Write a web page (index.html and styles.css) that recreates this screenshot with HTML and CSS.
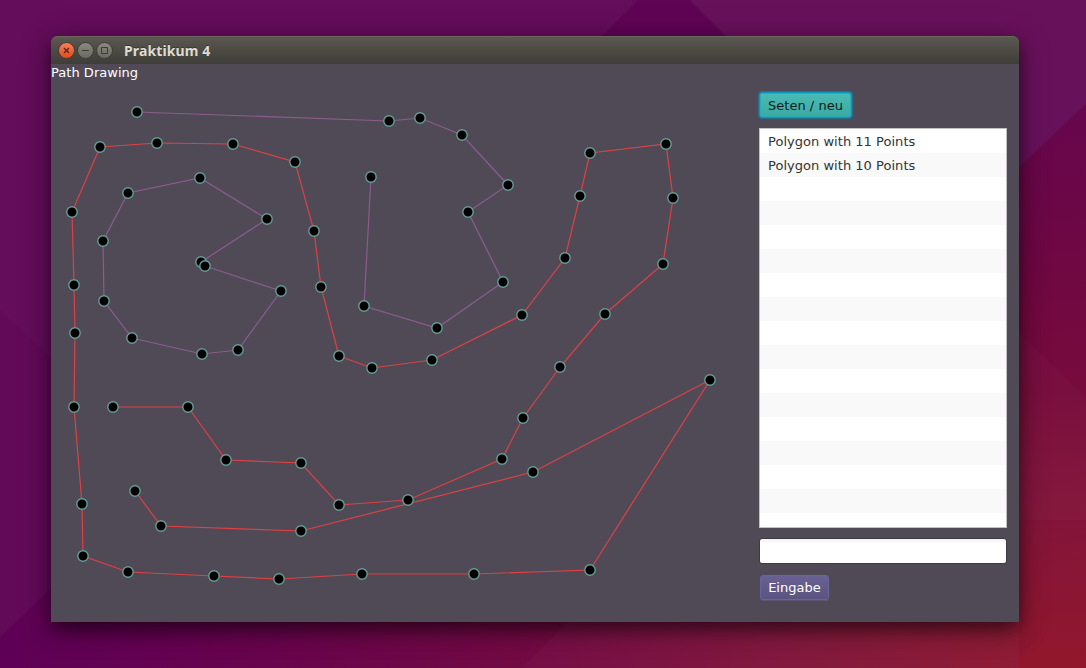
FILE: index.html
```html
<!DOCTYPE html>
<html lang="de">
<head>
<meta charset="utf-8">
<title>Praktikum 4</title>
<link rel="stylesheet" href="styles.css">
</head>
<body>
<svg class="wallpaper" viewBox="0 0 1086 668" aria-hidden="true">
  <defs>
    <linearGradient id="right" gradientUnits="userSpaceOnUse" x1="1040" y1="110" x2="1070" y2="668">
      <stop offset="0" stop-color="#66064d"/>
      <stop offset=".3" stop-color="#700842"/>
      <stop offset=".5" stop-color="#770b3b"/>
      <stop offset=".75" stop-color="#841539"/>
      <stop offset="1" stop-color="#92172c"/>
    </linearGradient>
    <linearGradient id="bottom" gradientUnits="userSpaceOnUse" x1="0" y1="640" x2="1086" y2="600">
      <stop offset="0" stop-color="#5e0056"/>
      <stop offset=".25" stop-color="#68044d"/>
      <stop offset=".5" stop-color="#730a42"/>
      <stop offset=".75" stop-color="#811539"/>
      <stop offset="1" stop-color="#90172e"/>
    </linearGradient>
  </defs>
  <rect width="1086" height="668" fill="#640d5b"/>
  <path d="M0 310L60 366V580L0 637z" fill="#620a58"/>
  <path d="M638 0H690L740 50H588z" fill="#5f0454"/>
  <path d="M690 0H1086V104L1000 185H860L740 50z" fill="#68115b"/>
  <path d="M1086 104V668H1000V185z" fill="url(#right)"/>
  <path d="M1000 314L1086 398V520H1000z" fill="#fff" opacity=".02"/>
  <path d="M0 637L60 580V600H1019V622H1040L1019 668H0z" fill="url(#bottom)"/>
  <path d="M522 668L590 600H1019V668z" fill="#fff" opacity=".025"/>
</svg>
<main class="window">
  <header class="titlebar">
    <svg class="controls" width="58" height="20" viewBox="0 0 58 20">
      <defs>
        <linearGradient id="close" x2="0" y2="1"><stop stop-color="#f7835c"/><stop offset="1" stop-color="#df491b"/></linearGradient>
        <linearGradient id="plain" x2="0" y2="1"><stop stop-color="#8b8981"/><stop offset="1" stop-color="#696861"/></linearGradient>
      </defs>
      <g stroke="#3b3a35">
        <circle cx="9.5" cy="10.5" r="8" fill="url(#close)"/>
        <circle cx="28.5" cy="10.5" r="8" fill="url(#plain)"/>
        <circle cx="47.5" cy="10.5" r="8" fill="url(#plain)"/>
      </g>
      <path d="M7 8l5 5M12 8l-5 5" stroke="#5e2410" stroke-width="1.3"/>
      <path d="M25 10.5h7M44.5 7.5h6v6h-6z" fill="none" stroke="#3c3b37"/>
    </svg>
    <h1 class="title">Praktikum 4</h1>
  </header>
  <p class="caption">Path Drawing</p>
  <div class="workspace">
    <svg class="drawing" width="700" height="540" viewBox="51 82 700 540">
      <defs>
        <marker id="dot" markerUnits="userSpaceOnUse" markerWidth="14" markerHeight="14" refX="7" refY="7">
          <circle cx="7" cy="7" r="5.2" fill="#000" stroke="#659f97" stroke-width="1.4"/>
        </marker>
      </defs>
      <polyline class="path violet" points="137,112 389,121 420,118 462,135 508,185 468,212 503,282 437,328 364,306 371,177"/>
      <polyline class="path violet" points="201,262 267,219 200,178 128,193 103,241 104,301 132,338 202,354 238,350 281,291 205,266"/>
      <polyline class="path red" points="113,407 188,407 226,460 301,463 339,505 408,500 502,459 523,418 560,367 605,314 663,264 673,198 666,144 590,153 580,196 565,258 522,315 432,360 372,368 339,356 321,287 314,231 295,162 233,144 157,143 100,147 72,212 74,285 75,333 74,407 82,504 83,556 128,572 214,576 279,579 362,574 474,574 590,570 710,380 533,472 301,531 161,526 135,491"/>
    </svg>
    <aside class="side">
      <button class="btn btn-new">Seten / neu</button>
      <ul class="list">
        <li>Polygon with 11 Points</li>
        <li>Polygon with 10 Points</li>
      </ul>
      <input class="field" type="text" aria-label="Eingabe">
      <button class="btn btn-enter">Eingabe</button>
    </aside>
  </div>
</main>
</body>
</html>
```
FILE: styles.css
```css
* {
  box-sizing: border-box;
}

body {
  margin: 0;
  width: 1086px;
  height: 668px;
  padding: 36px 67px 46px 51px;
  overflow: hidden;
  background: #650b52;
  font: 13px/18px "DejaVu Sans", sans-serif;
  letter-spacing: .03px;
}

.wallpaper {
  position: absolute;
  inset: 0;
  z-index: -1;
  width: 1086px;
  height: 668px;
}

.window {
  height: 586px;
  display: flex;
  flex-direction: column;
  border-radius: 7px 7px 0 0;
  background: #504a57;
  box-shadow: 0 8px 18px rgba(0, 0, 0, .5), 0 4px 32px rgba(0, 0, 0, .25);
}

.titlebar {
  height: 28px;
  flex: none;
  display: flex;
  align-items: center;
  gap: 9px;
  padding: 0 6px;
  border-radius: 7px 7px 0 0;
  background: linear-gradient(#5b5950, #3e3d38);
  box-shadow: inset 0 1px #68665d;
}

.title {
  margin: 0;
  padding-top: 1px;
  color: #dfdbd2;
  font: bold 14px/28px "Noto Sans", sans-serif;
  letter-spacing: .12px;
  text-shadow: 0 -1px rgba(0, 0, 0, .3);
}

.caption {
  margin: 0;
  height: 18px;
  color: #fff;
}

.workspace {
  display: flex;
  gap: 8px;
}

.drawing {
  flex: none;
}

.path {
  fill: none;
  stroke-width: 1.2;
  marker-start: url(#dot);
  marker-mid: url(#dot);
  marker-end: url(#dot);
}

.violet {
  stroke: #8b5c8e;
}

.red {
  stroke: #dd4144;
}

.side {
  width: 248px;
  padding-top: 10px;
  display: flex;
  flex-direction: column;
  align-items: flex-start;
}

.btn {
  border: 0;
  padding: 0;
  font: inherit;
  letter-spacing: inherit;
  text-align: center;
  border-radius: 3px;
}

.btn-new {
  width: 93px;
  height: 26px;
  padding-top: 1px;
  border: 1px solid #0b94c4;
  color: #101c1c;
  background: linear-gradient(#49bcb5, #3ca9a2);
  box-shadow: inset 0 0 0 1px #2aabb9, 0 0 1px 1px rgba(3, 158, 211, .45);
}

.list {
  width: 248px;
  height: 400px;
  margin: 10px 0 0;
  padding: 0;
  list-style: none;
  border: 1px solid #c2c0c2;
  color: #333;
  background: repeating-linear-gradient(#fff 0 24px, #f9f9f9 24px 48px);
}

.list li {
  height: 24px;
  padding-left: 8px;
  line-height: 25px;
}

.field {
  width: 248px;
  height: 26px;
  margin-top: 10px;
  border: 1px solid #403947;
  border-radius: 3px;
  background: linear-gradient(#f1eff2, #fff 4px);
  outline: 0;
}

.btn-enter {
  width: 69px;
  height: 25px;
  margin: 11px 0 0 1px;
  border: 1px solid #6b649c;
  color: #fff;
  background: linear-gradient(#686192, #5b5481);
  box-shadow: 0 1px #5d5574;
}
```
